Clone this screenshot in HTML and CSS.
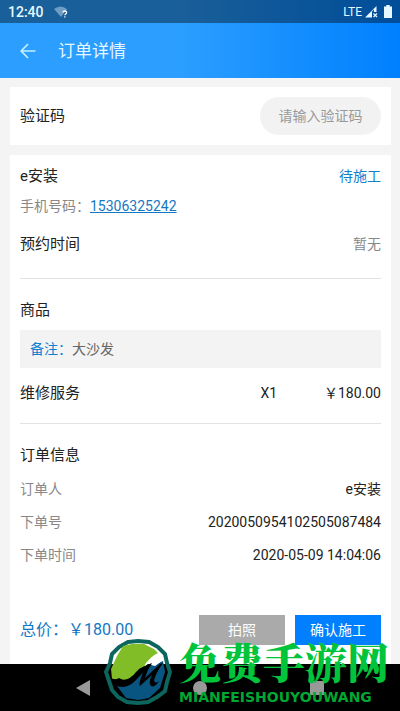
FILE: index.html
```
<!DOCTYPE html>
<html lang="zh-CN">
  <head>
    <meta charset="UTF-8" />
    <meta name="viewport" content="width=device-width, initial-scale=1.0" />
    <title>订单详情</title>
    <link rel="stylesheet" href="styles.css">
  </head>
  <body>
    <div class="top">
      <div class="status-bar">
        <span class="clock">12:40</span>
        <svg class="wifi" width="14" height="12" viewBox="0 0 14 12">
          <path d="M0 3Q6.500-2 13 3L7 11Z" fill="#6f9dc4" />
          <path d="M9 6.500Q9 5 10.800 5Q12.600 5 12.600 6.500Q12.600 7.500 11.500 8.200Q10.800 8.700 10.800 9.200M10.800 10.300V11.500" fill="none" stroke="#fff" stroke-width="1.300" />
        </svg>
        <span class="network">LTE</span>
        <svg width="13" height="12" viewBox="0 0 13 12">
          <path d="M0 11.500L11.500 0V6H7V11.500Z" fill="#e6f8ff" />
          <path d="M9 3.500V6H6.500Z" fill="#0b5598" />
          <path d="M8.500 7.500L12 11M12 7.500L8.500 11" stroke="#e6f8ff" stroke-width="1.200" />
        </svg>
        <svg class="battery" width="8" height="13" viewBox="0 0 8 13">
          <path d="M0 1.500H2.300V0H5.700V1.500H8V13H0Z" fill="#e6f8ff" />
        </svg>
      </div>
      <header class="header">
        <button class="back" aria-label="返回">
          <svg width="16" height="16" viewBox="0 0 16 16">
            <path d="M8 1L1.200 8L8 15M1.200 8H15.500" fill="none" stroke="#c4efff" stroke-width="1.700" />
          </svg>
        </button>
        <h1>订单详情</h1>
      </header>
    </div>

    <main class="content">
      <section class="card code-card">
        <label class="title" for="code">验证码</label>
        <input type="text" id="code" class="code-input" placeholder="请输入验证码" />
      </section>

      <section class="card order-card">
        <div class="row">
          <h2 class="title">e安装</h2>
          <span class="status">待施工</span>
        </div>
        <p class="phone">手机号码：<a href="tel:15306325242">15306325242</a></p>
        <div class="row time-row">
          <h2 class="title">预约时间</h2>
          <span class="muted">暂无</span>
        </div>

        <div class="goods">
          <h2 class="title">商品</h2>
          <p class="remark"><span>备注：</span>大沙发</p>
          <div class="goods-row">
            <h3 class="title">维修服务</h3>
            <span>X1</span>
            <span class="price">￥180.00</span>
          </div>
        </div>

        <div class="info">
          <h2 class="title">订单信息</h2>
          <dl>
            <div class="row"><dt>订单人</dt><dd>e安装</dd></div>
            <div class="row"><dt>下单号</dt><dd>2020050954102505087484</dd></div>
            <div class="row"><dt>下单时间</dt><dd>2020-05-09 14:04:06</dd></div>
          </dl>
        </div>

        <div class="actions">
          <p class="total">总价：￥180.00</p>
          <button class="btn photo">拍照</button>
          <button class="btn confirm">确认施工</button>
        </div>
      </section>
    </main>

    <nav class="nav-bar">
      <svg width="14" height="16" viewBox="0 0 14 16"><path d="M0 8L14 0V16Z" /></svg>
      <svg width="14" height="16" viewBox="0 0 14 16"><circle cx="7" cy="8" r="7" /></svg>
      <svg width="14" height="16" viewBox="0 0 14 16"><path d="M0 1H14V15H0Z" /></svg>
    </nav>

    <div class="watermark">
      <svg width="68" height="66" viewBox="0 0 68 66">
        <path d="M24 3L34 2L45 3L54 8L61 15L63 24L66 33L63 43L61 52L53 58L44 63L34 64L23 63L14 58L8 51L5 42L2 33L6 24L8 15L15 8Z" fill="none" stroke="#0d665d" stroke-width="4" />
        <path d="M19 7L28 5H40L50 10L54 14Q46 17 43 26L35 30Q30 41 23 41L8 40L7 30L13 17Z" fill="#80bd27" />
        <path d="M13 47Q24 50 32 41L45 27L59 22L61 33L56 49L45 59L34 61L22 59Z" fill="#075580" />
        <path d="M57 14L58 22L51 27L47 26L49 21L40 28Q43 19 57 14Z" fill="#fff" />
        <path d="M8 39L11 41L15 39L19 41Q27 40 32 33Q37 28 48 24Q43 31 41 39L56 25L59 24Q51 35 50 42Q52 45 55 42Q51 49 47 47Q44 44 48 36L36 47Q34 45 40 31Q35 33 28 43Q21 51 12 46Z" fill="#000" />
      </svg>
      <div class="site">
        <strong>免费手游网</strong>
        <span>MIANFEISHOUYOUWANG</span>
      </div>
    </div>
  </body>
</html>
```
FILE: styles.css
```
* {
  box-sizing: border-box;
}

body {
  margin: 0;
  min-height: 100vh;
  display: flex;
  flex-direction: column;
  position: relative;
  background: #f4f4f4;
  color: #222;
  font-family: Roboto, "Noto Sans CJK SC", sans-serif;
  font-size: 14px;
  line-height: 20px;
}

h1,
h2,
h3,
p,
dl,
dd {
  margin: 0;
  font-weight: 400;
}

svg {
  display: block;
  flex: none;
}

button {
  border: none;
  padding: 0;
  font: inherit;
  cursor: pointer;
}

/* Top */
.top {
  background: linear-gradient(to right, #2b9eff 0%, #2b9eff 45%, #0080ff 100%);
  color: #e6f8ff;
}

.status-bar {
  display: flex;
  align-items: center;
  height: 23px;
  padding: 0 8px;
  background: rgba(0, 0, 0, 0.4);
}

.clock {
  font-weight: 500;
}

.wifi {
  margin-left: 10px;
}

.network {
  margin: 0 3px 0 auto;
  font-size: 12px;
}

.battery {
  margin-left: 6px;
}

.header {
  display: flex;
  align-items: center;
  gap: 22px;
  height: 55px;
  padding: 0 20px;
}

.back {
  background: none;
}

.header h1 {
  font-size: 17px;
  line-height: 24px;
}

/* Cards */
.content {
  flex: 1;
  display: flex;
  flex-direction: column;
  gap: 10px;
  padding: 9px 9px 0 10px;
}

.card {
  background: #fff;
  padding: 10px;
}

.title {
  font-size: 15px;
  line-height: 22px;
}

.code-card {
  display: flex;
  align-items: center;
  justify-content: space-between;
}

.code-input {
  width: 121px;
  height: 38px;
  border: none;
  border-radius: 19px;
  outline: none;
  background: #f2f2f2;
  color: #222;
  font: inherit;
  text-align: center;
}

.code-input::placeholder {
  color: #999;
}

.order-card {
  flex: 1;
  padding-bottom: 19px;
}

.row {
  display: flex;
  align-items: center;
  justify-content: space-between;
}

.status {
  color: #1080d0;
}

.phone {
  margin-top: 9px;
  color: #888;
}

.phone a {
  color: #1478c4;
}

.time-row {
  margin-top: 17px;
}

.muted,
dt {
  color: #888;
}

.goods,
.info {
  margin-top: 23px;
  padding-top: 20px;
  border-top: 1px solid #e2e2e2;
}

.remark {
  margin-top: 9px;
  padding: 9px 10px;
  background: #f3f3f3;
  color: #666;
}

.remark span {
  color: #1080d0;
}

.goods-row {
  display: grid;
  grid-template-columns: 2fr 1fr 1fr;
  margin-top: 14px;
}

.goods-row span {
  line-height: 22px;
  padding-left: 60px;
}

.goods-row .price {
  padding: 0;
  text-align: right;
}

.info {
  margin-top: 19px;
}

dl {
  display: flex;
  flex-direction: column;
  gap: 13px;
  margin-top: 13px;
}

.actions {
  display: flex;
  gap: 10px;
  margin-top: 50px;
}

.total {
  flex: 1;
  color: #1478c4;
  font-size: 16px;
  line-height: 30px;
}

.btn {
  width: 86px;
  height: 30px;
  color: #fff;
}

.photo {
  background: #aaa;
}

.confirm {
  background: #0080ff;
}

/* Bottom */
.nav-bar {
  display: flex;
  align-items: center;
  justify-content: space-between;
  height: 47px;
  padding: 0 19%;
  background: #000;
  fill: #999;
}

.watermark {
  position: absolute;
  left: 104px;
  bottom: 6px;
  display: flex;
  align-items: center;
  gap: 7px;
  color: #00c43c;
  pointer-events: none;
}

.site {
  display: flex;
  flex-direction: column;
  gap: 7px;
}

.site strong {
  font-family: "Noto Serif CJK SC", "Noto Sans CJK SC", serif;
  font-size: 42px;
  font-weight: 900;
  line-height: 42px;
}

.site span {
  color: #00a832;
  font-family: "DejaVu Sans", sans-serif;
  font-size: 14px;
  font-weight: 700;
  line-height: 16px;
}
```
